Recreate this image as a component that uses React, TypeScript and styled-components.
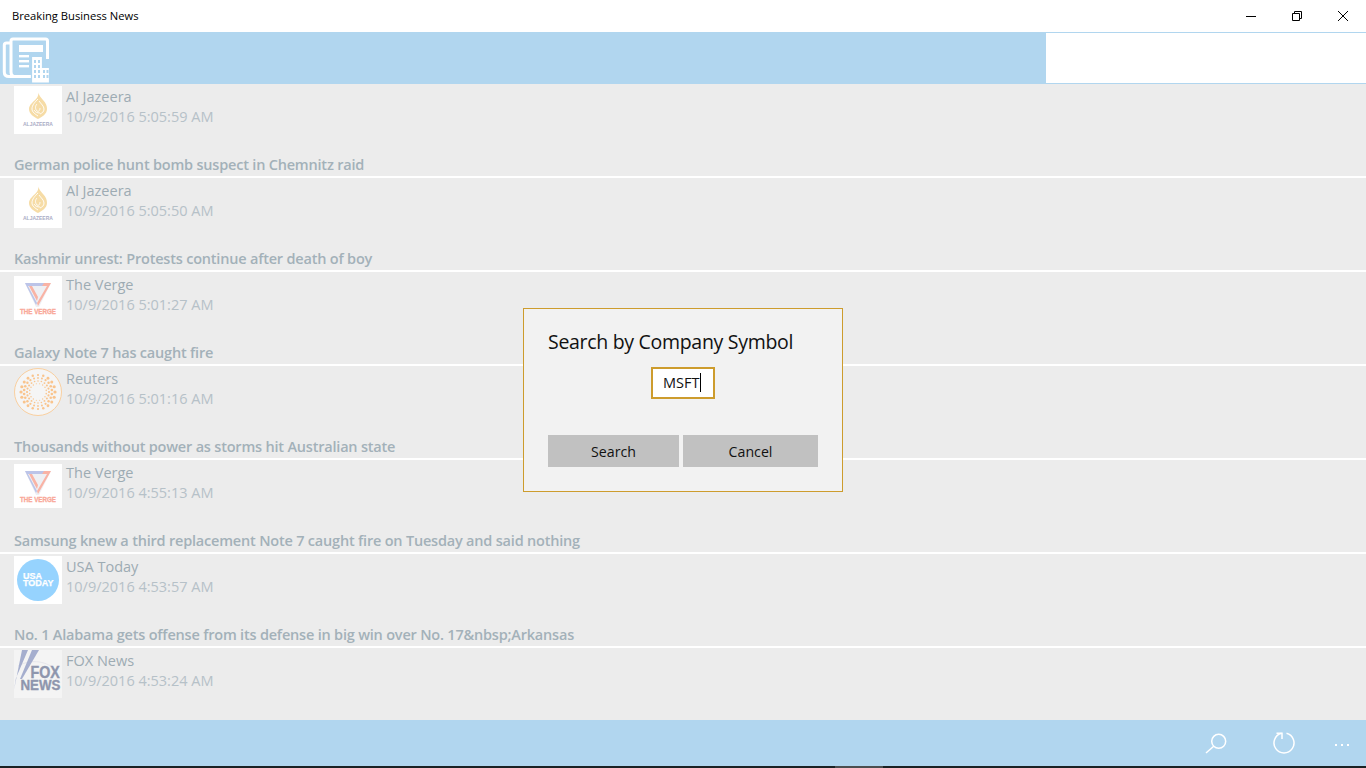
import styled, { createGlobalStyle } from 'styled-components'
import { ReactNode } from 'react'

const GlobalStyle = createGlobalStyle`
  html, body {
    margin: 0;
    padding: 0;
    height: 100%;
    overflow: hidden;
  }
  body {
    font-family: 'Open Sans', 'Noto Sans', 'Liberation Sans', sans-serif;
  }
`

const Page = styled.div`
  position: relative;
  width: 1366px;
  height: 768px;
  display: flex;
  flex-direction: column;
  background: #ececec;
  overflow: hidden;
`

const TitleBar = styled.div`
  height: 32px;
  flex: none;
  display: flex;
  align-items: center;
  background: #fff;
`

const AppTitle = styled.div`
  flex: 1;
  padding: 0 0 2px 12px;
  font-size: 11.2px;
  color: #000;
`

const WinButton = styled.div`
  width: 46px;
  height: 32px;
  display: flex;
  align-items: center;
  justify-content: center;
`

const Header = styled.div`
  height: 52px;
  flex: none;
  display: flex;
`

const HeaderBlue = styled.div`
  width: 1046px;
  background: #b1d6ef;
  display: flex;
`

const SearchSlot = styled.div`
  flex: 1;
  background: #fff;
  border-top: 1px solid #b1d6ef;
  border-bottom: 1px solid #b1d6ef;
`

const List = styled.div`
  flex: 1;
  display: flex;
  flex-direction: column;
  overflow: hidden;
`

const Row = styled.div`
  flex: none;
  height: 92px;
  margin-bottom: 2px;
  box-sizing: border-box;
  padding: 2px 0 0 14px;
  background: #ececec;
  box-shadow: 0 2px 0 #fff;
  display: flex;
  flex-direction: column;
`

const RowTop = styled.div`
  display: flex;
  height: 48px;
`

const Logo = styled.div<{ $height?: number; $plain?: boolean }>`
  width: 48px;
  height: ${p => p.$height ?? 48}px;
  flex: none;
  align-self: center;
  background: ${p => (p.$plain ? 'transparent' : '#fff')};
  display: flex;
`

const Source = styled.div`
  margin: 1px 0 0 4px;
  display: flex;
  flex-direction: column;
`

const SourceName = styled.div`
  font-size: 14.5px;
  line-height: 20px;
  color: #9dabb3;
`

const SourceDate = styled.div`
  font-size: 14.5px;
  line-height: 20px;
  color: #b6c1c8;
`

const Headline = styled.div`
  margin-top: 21px;
  font-size: 14.5px;
  line-height: 20px;
  font-weight: 600;
  letter-spacing: -0.2px;
  color: #a3b1b9;
  white-space: nowrap;
`

const BottomBar = styled.div`
  height: 46px;
  flex: none;
  background: #b1d6ef;
  display: flex;
  align-items: center;
  justify-content: flex-end;
`

const BarButton = styled.div<{ $narrow?: boolean }>`
  width: ${p => (p.$narrow ? 48 : 68)}px;
  height: 46px;
  display: flex;
  align-items: center;
  justify-content: center;
`

const TaskEdge = styled.div`
  height: 2px;
  flex: none;
  background: #1a2224;
  display: flex;
  padding-left: 835px;
`

const TaskMark = styled.div`
  width: 48px;
  background: #4b4f50;
`

const Dialog = styled.div`
  position: absolute;
  left: 523px;
  top: 308px;
  width: 320px;
  height: 184px;
  box-sizing: border-box;
  background: #f2f2f2;
  border: 1px solid #cd9c2d;
  padding: 19px 24px 0;
  display: flex;
  flex-direction: column;
`

const DialogTitle = styled.div`
  font-size: 19.5px;
  line-height: 28px;
  letter-spacing: -0.3px;
  color: #111;
  white-space: nowrap;
`

const FieldRow = styled.div`
  display: flex;
  justify-content: center;
  margin-top: 11px;
`

const Field = styled.div`
  width: 64px;
  height: 32px;
  box-sizing: border-box;
  border: 2px solid #cd9c2d;
  background: #fff;
  padding: 0 0 2px 10px;
  display: flex;
  align-items: center;
  font-size: 14.5px;
  color: #111;
`

const Caret = styled.span`
  width: 1px;
  height: 19px;
  margin-left: 1px;
  background: #000;
`

const DialogActions = styled.div`
  display: flex;
  gap: 4px;
  margin-top: 36px;
`

const ActionButton = styled.div<{ $width: number }>`
  width: ${p => p.$width}px;
  height: 32px;
  background: #c1c1c1;
  display: flex;
  align-items: center;
  justify-content: center;
  font-size: 14.2px;
  color: #111;
`

const AlJazeera = () => (
  <svg width="48" height="48" viewBox="0 0 48 48">
    <path d="M25 6c-1 3 2 5 4 8 3 3 4 6 4 9 0 5-5 8-9 10-4-2-9-5-9-10 0-4 4-7 7-10 2-2 2-4 3-7z" fill="#f6dca6" />
    <g fill="none" stroke="#fff" strokeWidth="0.9">
      <path d="M24 13c-3 3-6 6-6 10 0 3 3 5 6 7" />
      <path d="M25 15c2 3 5 5 5 8 0 3-2 4-4 5" />
      <path d="M23 18c-2 2-2 5 0 7 2 1 3-1 3-3" />
      <path d="M20 24c1 2 3 3 6 3" />
    </g>
    <text transform="translate(9 39.5) scale(0.96 1)" fontFamily="'Liberation Sans', sans-serif" fontSize="5.2" fontWeight="700" fill="#aaacc5">ALJAZEERA</text>
  </svg>
)

const Verge = () => (
  <svg width="48" height="44" viewBox="0 0 48 44">
    <path d="M11 7h26L25 31h-3z" fill="#eef0f4" />
    <path d="M11 7h20l-2 3H14l9 17-1 2z" fill="#bcc4e8" />
    <path d="M37 7L24 30l-1-3 10-17h-5l2-3z" fill="#f9b3a5" />
    <path d="M15 10h3l6 11-1 4z" fill="#f9b3a5" />
    <text transform="translate(6 37.5) scale(0.78 1)" fontFamily="'Liberation Sans', sans-serif" fontSize="8" fontWeight="700" fill="#f9a898" stroke="#f9a898" strokeWidth="0.35">THE VERGE</text>
  </svg>
)

const reutersDots = () => {
  const dots: { x: number; y: number; r: number }[] = []
  const rings: [number, number, number][] = [
    [17, 20, 1.35],
    [14, 22, 1.1],
    [11, 20, 0.9],
    [8.4, 16, 0.65],
  ]
  rings.forEach(([radius, count, r], ring) => {
    for (let i = 0; i < count; i++) {
      const a = ((i + (ring % 2) / 2) / count) * Math.PI * 2
      const side = Math.abs(Math.cos(a))
      dots.push({ x: 24 + Math.cos(a) * radius, y: 24 + Math.sin(a) * radius, r: r * (0.8 + side * 0.4) })
    }
  })
  return dots
}

const Reuters = () => (
  <svg width="48" height="48" viewBox="0 0 48 48">
    <circle cx="24" cy="24" r="23.5" fill="#f5f5f5" stroke="#f9cf9f" />
    {reutersDots().map((d, i) => (
      <circle key={i} cx={d.x} cy={d.y} r={d.r} fill="#f9c48d" />
    ))}
  </svg>
)

const UsaToday = () => (
  <svg width="48" height="48" viewBox="0 0 48 48">
    <circle cx="24" cy="24" r="21" fill="#96d3fe" />
    <g fontFamily="'Liberation Sans', sans-serif" fontSize="9" fontWeight="700" fill="#fff" stroke="#fff" strokeWidth="0.25">
      <text x="9" y="22.7">USA</text>
      <text x="9" y="30.4">TODAY</text>
    </g>
  </svg>
)

const FoxNews = () => (
  <svg width="48" height="48" viewBox="0 0 48 48">
    <rect width="48" height="48" fill="#f4f4f4" />
    <path d="M4 16C18 8 34 12 42 20" fill="none" stroke="#dfe0e6" strokeWidth="0.7" />
    <path d="M8 0h6L2 28 0 40z" fill="#a5aece" />
    <path d="M18 0h7L8 29H6z" fill="#a5aece" />
    <g fontFamily="'Liberation Sans', sans-serif" fontWeight="700" fill="#8e96ad" stroke="#8e96ad" strokeWidth="0.4">
      <text transform="translate(16.5 28.3) scale(0.89 1)" fontSize="16">FOX</text>
      <text transform="translate(6.5 40) scale(0.86 1)" fontSize="15.5">NEWS</text>
    </g>
  </svg>
)

const NewsIcon = () => (
  <svg width="52" height="52" viewBox="0 32 52 52" fill="none">
    <g stroke="#fff" strokeWidth="3">
      <path d="M11 43H6.5Q4.3 43 4.3 45V72Q4.3 76.5 9 76.5H31" />
      <path d="M11 72V41Q11 39 13 39H45.5Q47.5 39 47.5 41V59" />
      <path d="M11 72Q11 76 14 76.5" />
    </g>
    <rect x="19" y="45" width="24" height="7" fill="#fff" />
    <rect x="19" y="55" width="10" height="2.4" fill="#fff" />
    <rect x="19" y="60" width="10" height="2.4" fill="#fff" />
    <rect x="19" y="65" width="10" height="2.4" fill="#fff" />
    <path d="M31.5 83V56.5H42.5V67.5H49.5V83z" fill="#fff" stroke="#b1d6ef" strokeWidth="1.2" />
    <g fill="#b1d6ef">
      <rect x="34" y="60" width="2" height="3" />
      <rect x="38" y="60" width="2" height="3" />
      <rect x="34" y="65" width="2" height="3" />
      <rect x="38" y="65" width="2" height="3" />
      <rect x="34" y="70" width="2" height="3" />
      <rect x="38" y="70" width="2" height="3" />
      <rect x="34" y="75" width="2" height="3" />
      <rect x="38" y="75" width="2" height="3" />
      <rect x="43" y="70" width="2" height="3" />
      <rect x="46.5" y="70" width="2" height="3" />
      <rect x="43" y="75" width="2" height="3" />
      <rect x="46.5" y="75" width="2" height="3" />
    </g>
  </svg>
)

type Item = {
  source: string
  date: string
  headline: string
  logo: ReactNode
  logoHeight?: number
  plain?: boolean
}

const items: Item[] = [
  { source: 'Al Jazeera', date: '10/9/2016 5:05:59 AM', headline: 'German police hunt bomb suspect in Chemnitz raid', logo: <AlJazeera /> },
  { source: 'Al Jazeera', date: '10/9/2016 5:05:50 AM', headline: 'Kashmir unrest: Protests continue after death of boy', logo: <AlJazeera /> },
  { source: 'The Verge', date: '10/9/2016 5:01:27 AM', headline: 'Galaxy Note 7 has caught fire', logo: <Verge />, logoHeight: 44 },
  { source: 'Reuters', date: '10/9/2016 5:01:16 AM', headline: 'Thousands without power as storms hit Australian state', logo: <Reuters />, plain: true },
  { source: 'The Verge', date: '10/9/2016 4:55:13 AM', headline: 'Samsung knew a third replacement Note 7 caught fire on Tuesday and said nothing', logo: <Verge />, logoHeight: 44 },
  { source: 'USA Today', date: '10/9/2016 4:53:57 AM', headline: 'No. 1 Alabama gets offense from its defense in big win over No. 17&nbsp;Arkansas', logo: <UsaToday /> },
  { source: 'FOX News', date: '10/9/2016 4:53:24 AM', headline: '', logo: <FoxNews /> },
]

export default function App() {
  return (
    <Page>
      <GlobalStyle />
      <TitleBar>
        <AppTitle>Breaking Business News</AppTitle>
        <WinButton>
          <svg width="10" height="10" viewBox="0 0 10 10"><path d="M0 5.5h10" stroke="#000" /></svg>
        </WinButton>
        <WinButton>
          <svg width="10" height="10" viewBox="0 0 10 10" fill="none"><path d="M.5 2.5h7v7h-7zM2.5 2.5v-2h7v7h-2" stroke="#000" /></svg>
        </WinButton>
        <WinButton>
          <svg width="10" height="10" viewBox="0 0 10 10"><path d="M0 0l10 10M10 0L0 10" stroke="#000" /></svg>
        </WinButton>
      </TitleBar>
      <Header>
        <HeaderBlue><NewsIcon /></HeaderBlue>
        <SearchSlot />
      </Header>
      <List>
        {items.map((item, i) => (
          <Row key={i}>
            <RowTop>
              <Logo $height={item.logoHeight} $plain={item.plain}>{item.logo}</Logo>
              <Source>
                <SourceName>{item.source}</SourceName>
                <SourceDate>{item.date}</SourceDate>
              </Source>
            </RowTop>
            <Headline>{item.headline}</Headline>
          </Row>
        ))}
      </List>
      <BottomBar>
        <BarButton>
          <svg width="24" height="24" viewBox="0 0 24 24" fill="none" stroke="#fff" strokeWidth="1.5"><circle cx="14.7" cy="10.3" r="7" /><path d="M9.7 15.3L2 22" /></svg>
        </BarButton>
        <BarButton>
          <svg width="24" height="24" viewBox="0 0 24 24" fill="none" stroke="#fff" strokeWidth="1.5"><path d="M14.5 2.3A10 10 0 1 1 9.5 2.3" /><path d="M4.5 2.3H10V8" /></svg>
        </BarButton>
        <BarButton $narrow>
          <svg width="14" height="8" viewBox="0 0 14 8" fill="#fff"><rect x="0" y="5" width="2" height="2" /><rect x="6" y="5" width="2" height="2" /><rect x="12" y="5" width="2" height="2" /></svg>
        </BarButton>
      </BottomBar>
      <TaskEdge><TaskMark /></TaskEdge>
      <Dialog>
        <DialogTitle>Search by Company Symbol</DialogTitle>
        <FieldRow>
          <Field>MSFT<Caret /></Field>
        </FieldRow>
        <DialogActions>
          <ActionButton $width={131}>Search</ActionButton>
          <ActionButton $width={135}>Cancel</ActionButton>
        </DialogActions>
      </Dialog>
    </Page>
  )
}
